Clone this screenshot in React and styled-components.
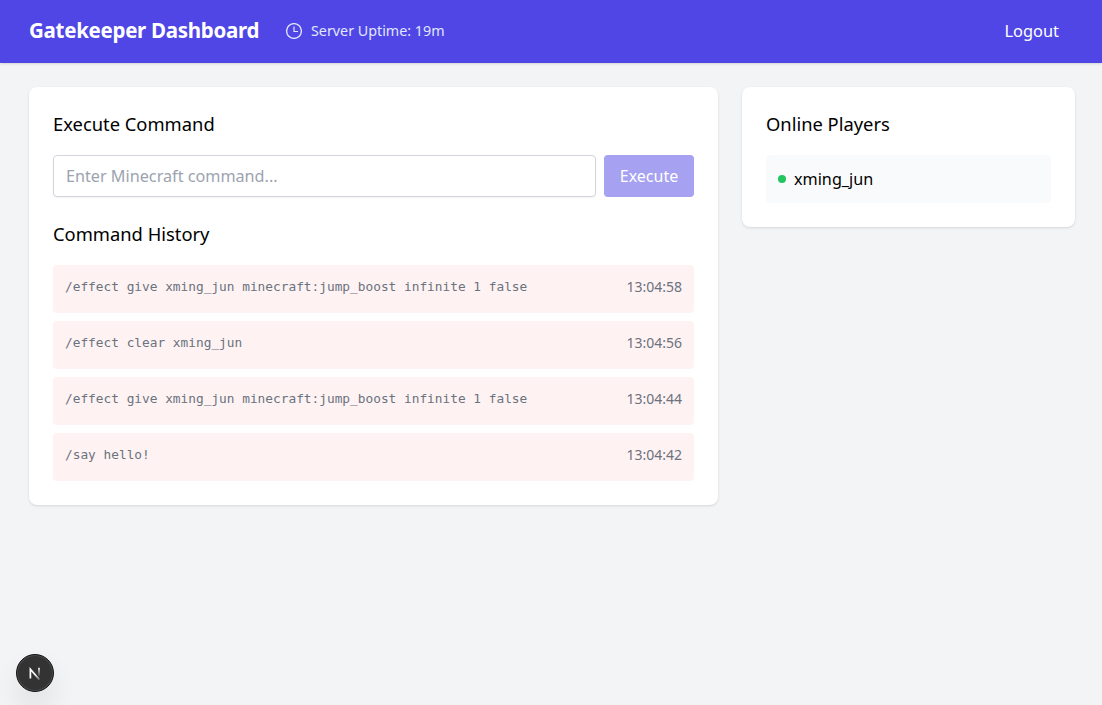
import React from "react";
import styled, { createGlobalStyle } from "styled-components";

const GlobalStyle = createGlobalStyle`
  *, *::before, *::after { box-sizing: border-box; }
  body {
    margin: 0;
    background: #f3f4f6;
    color: #000;
    font: 400 16px/24px "Noto Sans", "Open Sans", sans-serif;
  }
  h1, h2, p, ul { margin: 0; padding: 0; }
  ul { list-style: none; }
  button, input { font: inherit; }
`;

const Page = styled.div`
  min-height: 100vh;
`;

const Header = styled.header`
  display: flex;
  align-items: center;
  justify-content: space-between;
  height: 63px;
  padding: 0 27px 2px 29px;
  background: #4f46e5;
  color: #fff;
  box-shadow: 0 1px 3px rgba(0, 0, 0, 0.1), 0 1px 2px -1px rgba(0, 0, 0, 0.1);
`;

const Brand = styled.div`
  display: flex;
  align-items: center;
`;

const Title = styled.h1`
  width: 257px;
  padding-bottom: 1px;
  font-size: 20.5px;
  line-height: 28px;
  font-weight: 700;
  letter-spacing: -0.28px;
  white-space: nowrap;
`;

const Uptime = styled.div`
  display: flex;
  align-items: center;
  gap: 9px;
  color: #e0e7ff;
  font-size: 14.3px;
  line-height: 20px;
  white-space: nowrap;

  svg {
    margin-top: 1px;
  }
`;

const LogoutButton = styled.button`
  padding: 8px 16px;
  border: 0;
  background: transparent;
  color: #fff;
  font-size: 16.4px;
  line-height: 24px;
`;

const Main = styled.main`
  display: grid;
  grid-template-columns: 689px 333px;
  align-items: start;
  gap: 24px;
  padding: 24px 27px 24px 29px;
`;

const Card = styled.section`
  padding: 24px;
  border-radius: 8px;
  background: #fff;
  box-shadow: 0 1px 3px rgba(0, 0, 0, 0.1), 0 1px 2px -1px rgba(0, 0, 0, 0.1);
`;

const Heading = styled.h2`
  margin-bottom: 18px;
  font-size: 18.35px;
  line-height: 26px;
  font-weight: 400;
`;

const CommandForm = styled.form`
  display: flex;
  gap: 8px;
  margin-bottom: 24px;
`;

const CommandInput = styled.input`
  flex: 1;
  min-width: 0;
  height: 42px;
  padding: 8px 12px;
  border: 1px solid #d1d5db;
  border-radius: 4px;
  background: #fff;
  box-shadow: 0 1px 2px rgba(0, 0, 0, 0.05);
  font-size: 16.2px;
  &::placeholder { color: #9ca3af; opacity: 1; }
`;

const ExecuteButton = styled.button`
  width: 90px;
  padding: 0;
  border: 0;
  border-radius: 4px;
  background: #4f46e5;
  color: #fff;
  opacity: 0.5;
`;

const List = styled.ul`
  display: flex;
  flex-direction: column;
  gap: 8px;
`;

const HistoryRow = styled.li`
  display: flex;
  justify-content: space-between;
  height: 48px;
  padding: 12px;
  border-radius: 4px;
  background: #fef2f2;
  color: #6b7280;
`;

const Command = styled.code`
  font: 400 12.8px/20px "DejaVu Sans Mono", monospace;
`;

const Time = styled.time`
  font-size: 14px;
  line-height: 20px;
`;

const PlayerRow = styled.li`
  display: flex;
  align-items: center;
  gap: 8px;
  height: 48px;
  padding: 12px;
  border-radius: 4px;
  background: #f9fafb;
  font-size: 16.2px;
`;

const OnlineDot = styled.span`
  width: 8px;
  height: 8px;
  border-radius: 50%;
  background: #22c55e;
`;

const DevBadge = styled.div`
  position: fixed;
  left: 16px;
  bottom: 13px;
  display: grid;
  place-items: center;
  width: 38px;
  height: 38px;
  border: 1px solid #141414;
  border-radius: 50%;
  background: #333;
  box-shadow: inset 0 0 0 1px #4d4d4d, 0 16px 32px -8px rgba(0, 0, 0, 0.24);
`;

const history = [
  ["/effect give xming_jun minecraft:jump_boost infinite 1 false", "13:04:58"],
  ["/effect clear xming_jun", "13:04:56"],
  ["/effect give xming_jun minecraft:jump_boost infinite 1 false", "13:04:44"],
  ["/say hello!", "13:04:42"],
];

function ClockIcon() {
  return (
    <svg width="16" height="16" viewBox="0 0 16 16" fill="none" stroke="currentColor">
      <circle cx="8" cy="8" r="7.4" strokeWidth="1.3" />
      <path d="M8 3.5V8.5H12" strokeWidth="1.2" />
    </svg>
  );
}

function NextMark() {
  return (
    <svg width="14" height="14" viewBox="0 0 14 14" fill="none">
      <defs>
        <linearGradient id="stem" x1="0" y1="2" x2="0" y2="11" gradientUnits="userSpaceOnUse">
          <stop stopColor="#fff" />
          <stop offset="1" stopColor="#fff" stopOpacity="0" />
        </linearGradient>
        <linearGradient id="diagonal" x1="8" y1="8" x2="12" y2="13" gradientUnits="userSpaceOnUse">
          <stop stopColor="#fff" />
          <stop offset="1" stopColor="#fff" stopOpacity="0.3" />
        </linearGradient>
      </defs>
      <path d="M2.4 12.5V3.2L11.4 13.6" stroke="url(#diagonal)" strokeWidth="1.7" />
      <path d="M11 1.8V10.5" stroke="url(#stem)" strokeWidth="1.6" />
    </svg>
  );
}

export default function App() {
  return (
    <Page>
      <GlobalStyle />
      <Header>
        <Brand>
          <Title>Gatekeeper Dashboard</Title>
          <Uptime>
            <ClockIcon />
            <span>Server Uptime: 19m</span>
          </Uptime>
        </Brand>
        <LogoutButton>Logout</LogoutButton>
      </Header>
      <Main>
        <Card>
          <Heading>Execute Command</Heading>
          <CommandForm>
            <CommandInput placeholder="Enter Minecraft command..." />
            <ExecuteButton type="button">Execute</ExecuteButton>
          </CommandForm>
          <Heading>Command History</Heading>
          <List>
            {history.map(([command, time]) => (
              <HistoryRow key={time}>
                <Command>{command}</Command>
                <Time>{time}</Time>
              </HistoryRow>
            ))}
          </List>
        </Card>
        <Card>
          <Heading>Online Players</Heading>
          <List>
            <PlayerRow>
              <OnlineDot />
              <span>xming_jun</span>
            </PlayerRow>
          </List>
        </Card>
      </Main>
      <DevBadge>
        <NextMark />
      </DevBadge>
    </Page>
  );
}
